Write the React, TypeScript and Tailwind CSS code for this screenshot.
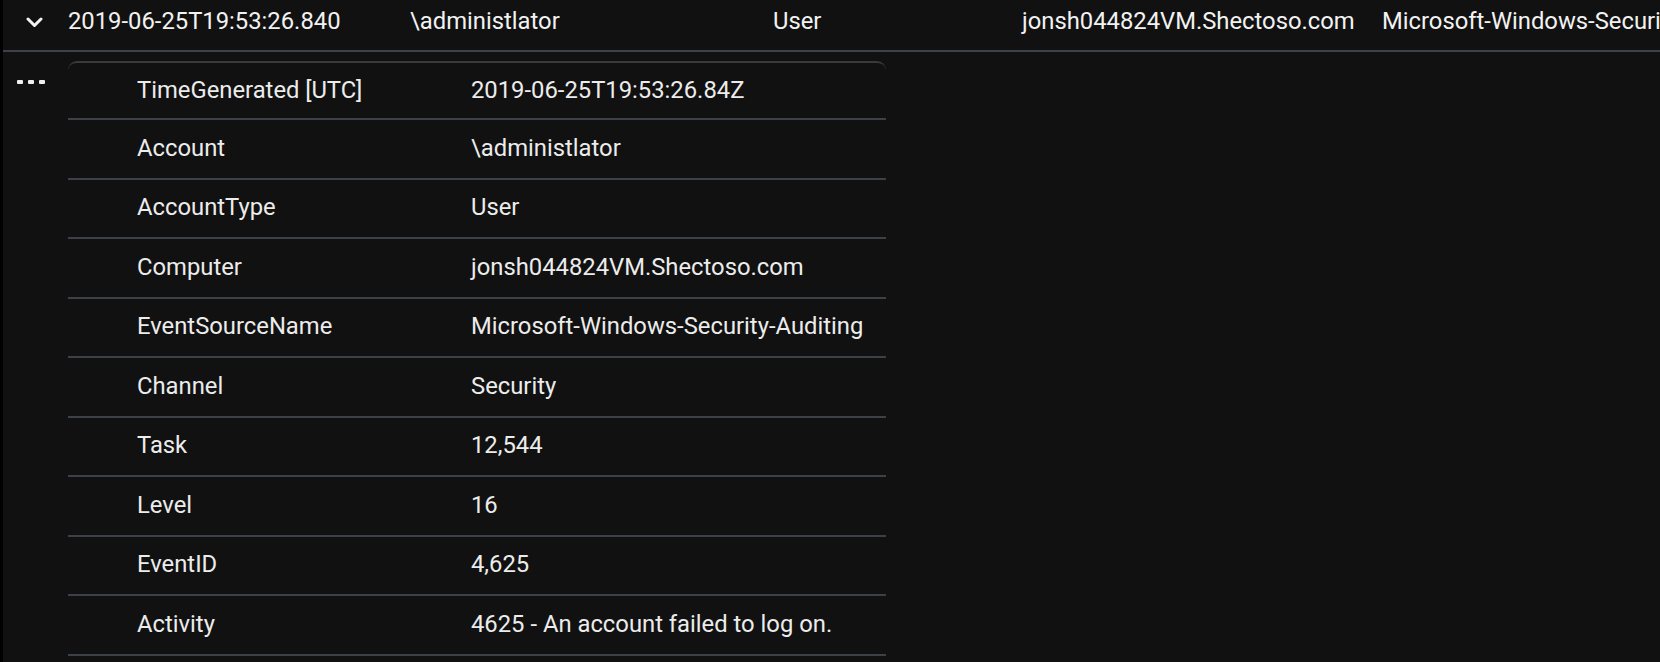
const header = [
  { text: "2019-06-25T19:53:26.840", w: "w-[342px]" },
  { text: "\\administlator", w: "w-[363px]" },
  { text: "User", w: "w-[249px]" },
  { text: "jonsh044824VM.Shectoso.com", w: "w-[360px]" },
  { text: "Microsoft-Windows-Security-Auditing", w: "w-[440px]" },
];

const details = [
  ["TimeGenerated [UTC]", "2019-06-25T19:53:26.84Z"],
  ["Account", "\\administlator"],
  ["AccountType", "User"],
  ["Computer", "jonsh044824VM.Shectoso.com"],
  ["EventSourceName", "Microsoft-Windows-Security-Auditing"],
  ["Channel", "Security"],
  ["Task", "12,544"],
  ["Level", "16"],
  ["EventID", "4,625"],
  ["Activity", "4625 - An account failed to log on."],
];

export default function App() {
  return (
    <div
      className="h-[662px] w-[1660px] overflow-hidden border-l-[3px] border-black bg-[#111111] text-[23.8px] text-[#ececec]"
      style={{ fontFamily: "Roboto, 'Noto Sans', sans-serif" }}
    >
      {/* collapsed summary row */}
      <div className="flex h-[52px] items-center border-b-2 border-[#3d4148] pb-[6px] whitespace-nowrap">
        <div className="flex w-[65px] shrink-0 justify-start pl-[23px]">
          <svg width="17" height="11" viewBox="0 0 17 11" fill="none">
            <path d="M2 2l6.5 6.5L15 2" stroke="#f2f2f2" strokeWidth="3" strokeLinecap="round" strokeLinejoin="round" />
          </svg>
        </div>
        {header.map((c) => (
          <div key={c.text} className={`${c.w} shrink-0 leading-none text-[#f2f2f2]`}>
            {c.text}
          </div>
        ))}
      </div>

      {/* expanded detail */}
      <div className="flex pt-[9px]">
        <div className="flex w-[65px] shrink-0 gap-[5px] pl-[14px] pt-[19px]">
          <span className="h-[4px] w-[6px] rounded-[1px] bg-[#f0f0f0]" />
          <span className="h-[4px] w-[6px] rounded-[1px] bg-[#f0f0f0]" />
          <span className="h-[4px] w-[6px] rounded-[1px] bg-[#f0f0f0]" />
        </div>
        <div className="w-[818px] rounded-t-[9px] border-t-2 border-[#3a3a3a]">
          {details.map(([k, v], i) => (
            <div
              key={k}
              className={`flex items-center border-b-2 border-[#3c4047] whitespace-nowrap ${i === 0 ? "h-[57px]" : "h-[59.5px]"}`}
            >
              <div className="w-[403px] shrink-0 pl-[69px]">{k}</div>
              <div>{v}</div>
            </div>
          ))}
        </div>
      </div>
    </div>
  );
}
